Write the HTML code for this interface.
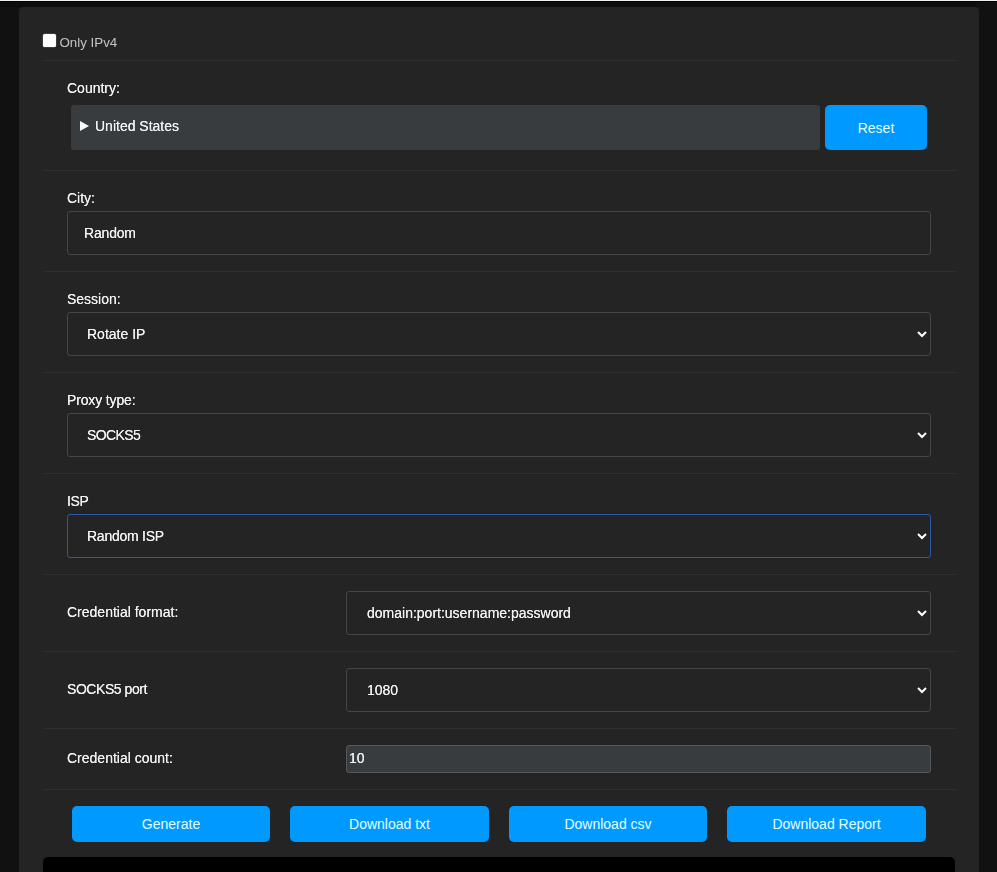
<!DOCTYPE html>
<html><head><meta charset="utf-8">
<style>
*{box-sizing:border-box;margin:0;padding:0}
html,body{width:997px;height:872px;overflow:hidden;background:#111;font-family:"Liberation Sans",sans-serif;color:#eee}
.topw{position:absolute;left:0;top:0;width:997px;height:1px;background:#f0f0f0}
.topb{position:absolute;left:0;top:1px;width:997px;height:1px;background:#000}
.topd{position:absolute;left:0;top:2px;width:976px;height:5px;background:#0d0d0d}
.card{position:absolute;left:19px;top:7px;width:960px;height:900px;background:#242424;border-radius:4px}
.abs{position:absolute}
.hr{position:absolute;left:44px;width:912px;height:1px;background:#2f2f2f}
.lbl{position:absolute;left:67px;font-size:14px;line-height:16px;color:#f2f2f2;white-space:nowrap;transform:translateZ(0);text-shadow:0 0 .5px rgba(255,255,255,.9)}
.ctl{position:absolute;left:67px;width:864px;height:44px;border:1px solid #464646;border-radius:3px;background:#242424}
.ctl .t{position:absolute;top:13px;font-size:14px;line-height:16px;color:#f2f2f2;white-space:nowrap;transform:translateZ(0);text-shadow:0 0 .5px rgba(255,255,255,.9)}
.chev{position:absolute;right:2px;top:17px;width:12px;height:8px}
.btn{position:absolute;top:806px;height:36px;background:#0099ff;border-radius:5px;color:#e0ffff;font-size:14px;line-height:36px;text-align:center;transform:translateZ(0)}
</style></head><body>
<div class="topw"></div><div class="topb"></div><div class="topd"></div>
<div class="card"></div>

<!-- only ipv4 -->
<div class="abs" style="left:43px;top:34px;width:13px;height:13px;background:#fff;border-radius:1.5px;box-shadow:0 0 0 0.5px #555"></div>
<div class="lbl" style="left:59.5px;top:34.5px;color:#c4c4c4;font-size:13.33px;text-shadow:none">Only IPv4</div>
<div class="hr" style="top:60px"></div>

<!-- country -->
<div class="lbl" style="top:80px">Country:</div>
<div class="abs" style="left:71px;top:105px;width:749px;height:45px;background:#393c3e;border-radius:3px"></div>
<svg class="abs" style="left:80px;top:121px" width="9" height="10" viewBox="0 0 9 10"><path d="M0 0L9 5L0 10Z" fill="#fafafa"/></svg>
<div class="lbl" style="left:95px;top:118px">United States</div>
<div class="btn" style="left:825px;top:105px;width:102px;height:45px;line-height:47px">Reset</div>
<div class="hr" style="top:170px"></div>

<!-- city -->
<div class="lbl" style="top:190px">City:</div>
<div class="ctl" style="top:211px"><div class="t" style="left:16px;letter-spacing:-.18px">Random</div></div>
<div class="hr" style="top:271px"></div>

<!-- session -->
<div class="lbl" style="top:291px">Session:</div>
<div class="ctl" style="top:312px"><div class="t" style="left:19px">Rotate IP</div>
<svg class="chev" viewBox="0 0 12 8"><path d="M2 2L6 6L10 2" stroke="#fff" stroke-width="2" fill="none"/></svg></div>
<div class="hr" style="top:372px"></div>

<!-- proxy type -->
<div class="lbl" style="top:392px;letter-spacing:-.14px">Proxy type:</div>
<div class="ctl" style="top:413px"><div class="t" style="left:19px;letter-spacing:-.6px">SOCKS5</div>
<svg class="chev" viewBox="0 0 12 8"><path d="M2 2L6 6L10 2" stroke="#fff" stroke-width="2" fill="none"/></svg></div>
<div class="hr" style="top:473px"></div>

<!-- isp -->
<div class="lbl" style="top:493px;letter-spacing:-.4px">ISP</div>
<div class="ctl" style="top:514px;border-color:#2c5aa6"><div class="t" style="left:19px;letter-spacing:-.25px">Random ISP</div>
<svg class="chev" viewBox="0 0 12 8"><path d="M2 2L6 6L10 2" stroke="#fff" stroke-width="2" fill="none"/></svg></div>
<div class="hr" style="top:574px"></div>

<!-- credential format -->
<div class="lbl" style="top:604px">Credential format:</div>
<div class="ctl" style="left:346px;width:585px;top:591px"><div class="t" style="left:20px">domain:port:username:password</div>
<svg class="chev" viewBox="0 0 12 8"><path d="M2 2L6 6L10 2" stroke="#fff" stroke-width="2" fill="none"/></svg></div>
<div class="hr" style="top:651px"></div>

<!-- socks5 port -->
<div class="lbl" style="top:681px;letter-spacing:-.45px">SOCKS5 port</div>
<div class="ctl" style="left:346px;width:585px;top:668px"><div class="t" style="left:20px">1080</div>
<svg class="chev" viewBox="0 0 12 8"><path d="M2 2L6 6L10 2" stroke="#fff" stroke-width="2" fill="none"/></svg></div>
<div class="hr" style="top:728px"></div>

<!-- count -->
<div class="lbl" style="top:750px">Credential count:</div>
<div class="abs" style="left:346px;top:745px;width:585px;height:28px;background:#393c3e;border:1px solid #55585b;border-radius:3px"></div>
<div class="lbl" style="left:349px;top:750px">10</div>
<div class="hr" style="top:789px"></div>

<!-- buttons -->
<div class="btn" style="left:72px;width:198px">Generate</div>
<div class="btn" style="left:290px;width:199px">Download txt</div>
<div class="btn" style="left:509px;width:198px">Download csv</div>
<div class="btn" style="left:727px;width:199px">Download Report</div>

<div class="abs" style="left:43px;top:857px;width:912px;height:30px;background:#000;border-radius:5px"></div>
</body></html>
